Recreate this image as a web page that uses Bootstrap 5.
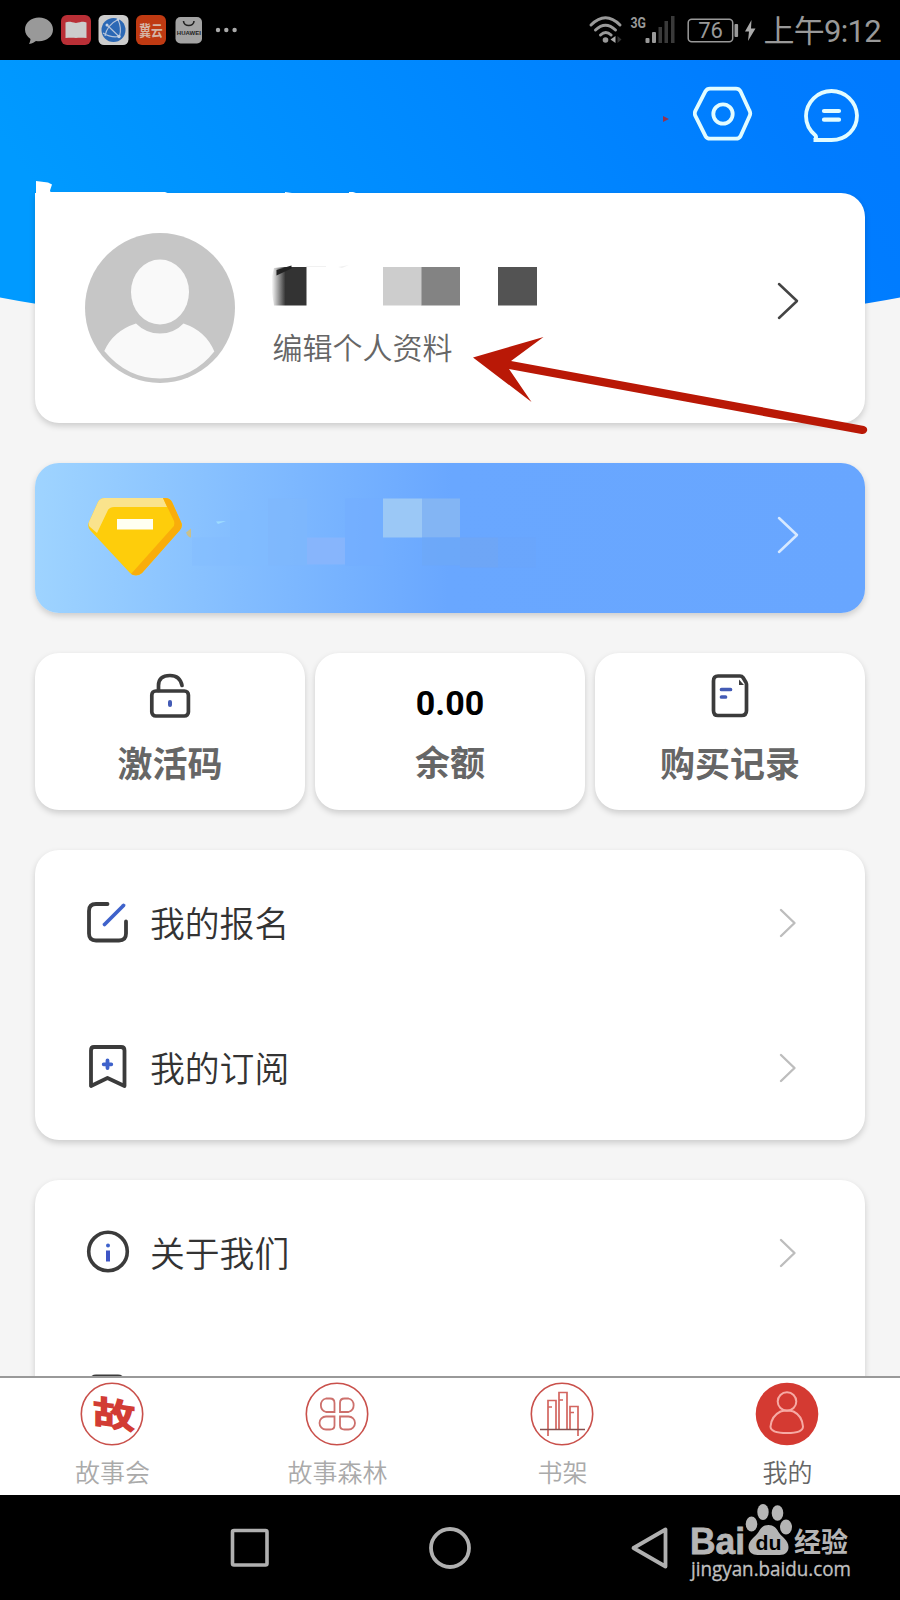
<!DOCTYPE html>
<html lang="zh-CN">
<head>
<meta charset="utf-8">
<meta name="viewport" content="width=device-width, initial-scale=1">
<title>我的</title>
<link href="https://cdn.jsdelivr.net/npm/bootstrap@5.3.0/dist/css/bootstrap.min.css" rel="stylesheet">
<style>
body{font-family:Roboto,"Noto Sans CJK SC",sans-serif;background:#f5f5f5;color:#333}
svg{display:block;flex:none}
.phone{width:900px;height:1600px}
.statusbar{height:60px;background:#000;color:#999}
.status-right{padding-right:19px}
.clock{font-size:31px;line-height:60px;letter-spacing:-.7px;padding-top:3px}
.screen{height:1316px}
.hero-bg{left:0;top:0;z-index:0}
.actions{height:133px;padding:25px 40px 0 0;gap:50px}
.sheet{background:#fff;border-radius:24px;box-shadow:0 3px 6px rgba(0,0,0,.17)}
.stack{padding:0 35px;gap:40px}
.profile{height:229.500px;padding:0 66px 0 50px;border-top-left-radius:0}
.profile-edit{font-size:30px;line-height:36px;color:#666;font-weight:350;padding-left:2.500px}
.profile-text{margin-left:35px;padding-top:15px}
.profile-arrow{margin-bottom:14px}
.notch{left:1px;top:-12px}
.member{height:150px;padding:0 66px 0 0;background:linear-gradient(92deg,#9fd4ff 0,#83bdff 25%,#69a7ff 50%,#68a6ff 100%)}
.member-arrow{margin-bottom:5px}
.stats{gap:10px}
.stat{height:157px;padding-top:19px}
.stat-label{font-size:35px;font-weight:700;line-height:42px;color:#666;padding-top:1px}
.stat-value{font-size:34px;font-weight:700;line-height:47px;color:#000}
.entry{height:145px;padding:0 68px 0 51px;font-size:34.8px;line-height:44px}
.entry-label{margin-left:20px;padding-top:6px;font-weight:350}
.entry-arrow{margin-top:2px}
.tabbar{height:119px;background:#fff;border-top:2px solid #999}
.tab-item{font-size:25px;font-weight:350;color:#aaa;padding-top:4px}
.tab-item span{line-height:32px;margin-top:12px}
.tab-item svg{margin-left:-1px}
.tab-item.current{color:#666}
.sysnav{height:105px;background:#000;gap:157px}
.watermark{right:40px;top:0}
.pointer{left:460px;top:325px;z-index:5}
</style>
</head>
<body>
<div class="phone position-relative overflow-hidden d-flex flex-column">

  <div class="statusbar d-flex align-items-center justify-content-between">
    <svg width="250" height="60" viewBox="0 0 250 60">
      <path d="M39 17.500c-8 0-14 5-14 12 0 4 2 7 5.500 9.500-.2 2-.8 3.600-1.500 5 3.500-.6 5.500-2 7-3 1 .2 2 .2 3 .2 8 0 14-5 14-11.700s-6-12-14-12z" fill="#999"/>
      <rect x="61" y="15" width="30" height="30" rx="6" fill="#b92f36"/>
      <path d="M65.500 22.500c3-1.500 6-.5 10.500.5 4.500-1 7.500-2 10.500-.5v15.500c-4-.5-8-.5-10.500 0-2.500-.5-6.500-.5-10.500 0z" fill="#ccc"/>
      <rect x="98.500" y="15" width="30" height="30" rx="5.500" fill="#ccc"/>
      <circle cx="113.500" cy="30" r="12" fill="#2b68b5"/>
      <path d="M118 19.500Q107 25 105 36M118 19.500q4 9 1.500 17M107 25l12 11.500M103 33q8 5 16 3.500" fill="none" stroke="#b8c6dc" stroke-width="1.100"/>
      <g fill="#c5d2e4"><circle cx="107" cy="25" r="1.500"/><circle cx="119" cy="36.500" r="1.700"/><circle cx="118" cy="19.500" r="1.300"/></g>
      <rect x="136" y="15" width="30" height="30" rx="6" fill="#bf3a12"/>
      <text transform="translate(151 36) scale(.9 1.15)" text-anchor="middle" font-size="13" font-weight="700" font-family="Noto Sans CJK SC,sans-serif" fill="#d5b5a5">冀云</text>
      <rect x="175.500" y="17" width="26.500" height="26.500" rx="5" fill="#a3a3a3"/>
      <path d="M183.500 21c0 6 10.500 6 10.500 0" fill="none" stroke="#222" stroke-width="1.600"/>
      <text x="188.800" y="34.700" text-anchor="middle" font-size="5.600" textLength="24" lengthAdjust="spacingAndGlyphs" font-weight="700" font-family="Liberation Sans,sans-serif" fill="#222">HUAWEI</text>
      <g fill="#aaa"><circle cx="218" cy="30" r="2.200"/><circle cx="226.300" cy="30" r="2.200"/><circle cx="234.600" cy="30" r="2.200"/></g>
    </svg>
    <div class="status-right d-flex align-items-center">
      <svg width="178" height="60" viewBox="584.500 0 178 60">
        <g fill="none" stroke="#999" stroke-width="3" stroke-linecap="round">
          <path d="M590.500 25q14.500-14.500 29 0M595 30q10-9.500 20 0M600 35q5.300-5 10.600 0"/>
        </g>
        <circle cx="605" cy="40" r="2.800" fill="#999"/>
        <path d="M615 36v7l-5-3.500z" fill="#aaa"/><path d="M617 36v7l4-3.500z" fill="#333"/>
        <text x="630" y="28" font-size="15.500" textLength="15.500" lengthAdjust="spacingAndGlyphs" font-weight="700" font-family="Roboto,sans-serif" fill="#999">3G</text>
        <g fill="#999"><rect x="645" y="38" width="4" height="5" rx="1"/><rect x="651.500" y="32" width="4" height="11" rx="1"/></g>
        <g fill="#3a3a3a"><rect x="658" y="27" width="3.500" height="16"/><rect x="664" y="21" width="3.500" height="22"/><rect x="670.500" y="16" width="3.500" height="27"/></g>
        <rect x="687.700" y="19.300" width="44.500" height="22.500" rx="3.500" fill="none" stroke="#999" stroke-width="1.500"/>
        <rect x="734" y="24" width="3.600" height="13" rx="1" fill="#999"/>
        <text x="710" y="38" text-anchor="middle" font-size="22" textLength="24.500" font-family="Roboto,sans-serif" fill="#999">76</text>
        <path d="M751 20l-6.500 11.500h4L747.500 41l7.500-12.500h-4.500z" fill="#aaa"/>
      </svg>
      <span class="clock">上午9:12</span>
    </div>
  </div>

  <main class="screen position-relative overflow-hidden">
    <svg class="hero-bg position-absolute" width="900" height="270" viewBox="0 0 900 270">
      <defs><linearGradient id="sky" x1="0" y1=".3" x2="1" y2="0.1"><stop offset="0" stop-color="#009aff"/><stop offset=".45" stop-color="#008aff"/><stop offset=".85" stop-color="#007cff"/><stop offset="1" stop-color="#007aff"/></linearGradient></defs>
      <path d="M0 0H900V237.500Q830 251 740 258H160Q70 251 0 237.500z" fill="url(#sky)"/>
      <path d="M663 56l6 3-6 3z" fill="#943350"/>
    </svg>

    <div class="position-relative">
      <div class="actions d-flex justify-content-end">
        <svg width="60" height="60" viewBox="693 85 60 60" fill="none" stroke="#e2fcff" stroke-width="3.800">
          <path stroke-linejoin="round" d="M710 88.700h26q3 0 4.500 2.500l9 19.500q1.500 3 0 5.500l-9 20q-1.500 2.500-4.500 2.500h-26q-3 0-4.500-2.500l-10-20q-1.500-2.500 0-5.500l10-19.500q1.500-2.500 4.500-2.500z"/>
          <circle cx="723" cy="114" r="9.700"/>
        </svg>
        <svg width="57" height="60" viewBox="803 85 57 60" fill="none" stroke="#e2fcff" stroke-width="3.800">
          <path d="M813.500 140h18c15 0 25.500-11 25.500-24.500A25.500 25.500 0 0 0 831.500 91 25.500 25.500 0 0 0 806 116c0 8 3.500 14.500 9.500 19.500q1.500 2-1 4.500z"/>
          <path d="M824 111h15M824 119.700h15" stroke-width="4.200" stroke-linecap="round"/>
        </svg>
      </div>

      <div class="stack d-flex flex-column">
        <section class="sheet profile position-relative d-flex align-items-center">
          <svg class="notch position-absolute" width="320" height="14" viewBox="36 181 320 14" fill="#fff"><path d="M36 181l12 1.500 4 2-2 6 .5 1.500H165l5 2H36zM285 194v-2l7 1v1zM349 192h4l3 1v1h-7z"/></svg>
          <svg width="150" height="150" viewBox="0 0 150 150">
            <circle cx="75" cy="75" r="75" fill="#c6c6c6"/>
            <ellipse cx="75" cy="59" rx="29" ry="32.500" fill="#f9f9f9"/>
            <path d="M51 90.500Q61 100.500 75 100.500T98.500 90.500Q121 98 129.300 118.500Q108 145.500 75 145.500T19.300 118Q28 98 51 90.500z" fill="#f9f9f9"/>
          </svg>
          <div class="profile-text flex-grow-1">
            <svg width="272" height="44" viewBox="270 264 272 44">
              <defs><linearGradient id="smudge"><stop offset="0" stop-color="#333" stop-opacity="0"/><stop offset=".4" stop-color="#333"/></linearGradient></defs>
              <path d="M274 269q-5 14 0 37.500h32.500v-38.500h-22z" fill="url(#smudge)"/>
              <path d="M276.500 271l15-4.500v3l-15 7z" fill="#222"/>
              <path d="M306 267h20v1h-20zM338 268l11-2-7 3z" fill="#f1f1f1"/>
              <path d="M383 268h39v38.500h-39z" fill="#cdcdcd"/><path d="M421.500 268H460v38.500h-38.500z" fill="#838383"/>
              <path d="M498 268h39v38.500h-39z" fill="#535353"/>
            </svg>
            <div class="profile-edit mt-4">编辑个人资料</div>
          </div>
          <svg class="profile-arrow" width="22" height="38" viewBox="0 0 22 38" fill="none" stroke="#444" stroke-width="2.500" stroke-linecap="round" stroke-linejoin="round"><path d="M2 2l18 17L2 36"/></svg>
        </section>

        <section class="sheet member d-flex align-items-center justify-content-between">
          <svg width="530" height="150" viewBox="35 462.500 530 150">
            <path fill="#7fb8fb" opacity=".6" d="M268 498h39v67h-39z"/><path fill="#80bbff" opacity=".5" d="M230 510h38v55h-38z"/><path fill="#82bbff" opacity=".4" d="M192 537h38v28h-38z"/><path fill="#8bb5fb" opacity=".8" d="M307 537h38v27h-38z"/><path fill="#73aeff" opacity=".6" d="M345 498h38v67h-38z"/>
            <path fill="#9bc8f6" d="M383 498h39v39h-39z"/><path fill="#83b5f4" d="M422 498h38v39h-38z"/>
            <path fill="#6ea8f5" opacity=".6" d="M422 537h38v28h-38z"/><path fill="#72a5f0" opacity=".6" d="M460 537h38v30h-38z"/><path fill="#6ba5fa" opacity=".6" d="M498 537h38v30h-38z"/>
            <path d="M216 521l10-.5-8 3z" fill="#9edcff"/><path d="M186 532l5-4v9q-3 0-5-5z" fill="#c9c08b"/>
            <path d="M105 497.500h60q5 0 7 4l9 20q2 4-1 8l-38 43q-6 5-12 0l-40-43q-3-4-1-8l9-20q2-4 7-4z" fill="#fecd0b"/>
            <path d="M105 497.500h58l4 9h-53q-4 0-6 3l-11 23-7-6q-2-2-1-5l9-20q2-4 7-4z" fill="#fae38c"/>
            <path d="M163 497.500h2q5 0 7 4l9 20q2 4-1 8l-38 43q-5 4-11 1l42-47q2-2 1-6z" fill="#f9ad0b"/>
            <rect x="117" y="518.500" width="36" height="10.500" fill="#fffff2"/>
          </svg>
          <svg class="member-arrow" width="22" height="38" viewBox="0 0 22 38" fill="none" stroke="#d7e9ff" stroke-width="2.500" stroke-linecap="round" stroke-linejoin="round"><path d="M2 2l18 17L2 36"/></svg>
        </section>

        <section class="stats d-flex">
          <div class="sheet stat flex-fill w-100 d-flex flex-column align-items-center">
            <svg width="44" height="48" viewBox="148 671.500 44 48" fill="none" stroke="#3b3b3b" stroke-width="3.700"><rect x="151.800" y="690.500" width="36.600" height="25" rx="4"/><path stroke-linecap="round" d="M158.500 690v-5q0-10 11.500-10 10 0 12 10"/><path d="M170 701.500v3" stroke="#435bb5" stroke-width="4" stroke-linecap="round"/></svg>
            <div class="stat-label mt-4">激活码</div>
          </div>
          <div class="sheet stat flex-fill w-100 d-flex flex-column align-items-center">
            <div class="stat-value mt-2">0.00</div>
            <div class="stat-label mt-3">余额</div>
          </div>
          <div class="sheet stat flex-fill w-100 d-flex flex-column align-items-center">
            <svg width="44" height="48" viewBox="708 671.500 44 48" fill="none" stroke="#3b3b3b" stroke-width="3.700"><path stroke-linejoin="round" d="M718 675.500h22q2 0 3 1.500l3 5q.5 1 .5 2v26q0 5-5 5h-23.500q-4.500 0-4.500-5v-29.500q0-5 4.500-5z"/><path d="M739 679l5 5.500h-5z" fill="#3b3b3b" stroke="none"/><path d="M721.500 689h9M721.500 696.500h4" stroke="#435bb5" stroke-linecap="round"/></svg>
            <div class="stat-label mt-4">购买记录</div>
          </div>
        </section>

        <section class="sheet">
          <div class="entry d-flex align-items-center">
            <svg width="44" height="48" viewBox="86 899 44 48" fill="none" stroke="#3b3b3b" stroke-width="3.800" stroke-linecap="round"><path d="M107.500 905H96q-7 0-7 7v22.500q0 7 7 7h23q7 0 7-7V922.500"/><path d="M104.500 925.500L123.500 906.500" stroke="#3e62cb"/></svg>
            <span class="entry-label flex-grow-1">我的报名</span>
            <svg class="entry-arrow" width="18" height="30" viewBox="0 0 18 30" fill="none" stroke="#bdbdbd" stroke-width="2.400" stroke-linecap="round" stroke-linejoin="round"><path d="M2 2l13.500 13L2 28"/></svg>
          </div>
          <div class="entry d-flex align-items-center">
            <svg width="44" height="48" viewBox="86 1044 44 48" fill="none" stroke="#3b3b3b" stroke-width="3.800" stroke-linejoin="round"><path d="M94 1048h27q3.500 0 3.500 3.500v35.500l-17-8-16.500 8v-35.500q0-3.500 3-3.500z"/><path d="M107.500 1061.500v7.500M103.700 1065.300h7.600" stroke="#3e62cb" stroke-linecap="round" stroke-width="3.800"/></svg>
            <span class="entry-label flex-grow-1">我的订阅</span>
            <svg class="entry-arrow" width="18" height="30" viewBox="0 0 18 30" fill="none" stroke="#bdbdbd" stroke-width="2.400" stroke-linecap="round" stroke-linejoin="round"><path d="M2 2l13.500 13L2 28"/></svg>
          </div>
        </section>

        <section class="sheet">
          <div class="entry d-flex align-items-center">
            <svg width="44" height="48" viewBox="86 1229 44 48" fill="none" stroke="#3b3b3b" stroke-width="3.600"><circle cx="108" cy="1252.500" r="19.300"/><path d="M108 1251.500v11" stroke="#3e55c5" stroke-width="4"/><circle cx="108" cy="1246.500" r="2" fill="#3e62cb" stroke="none"/></svg>
            <span class="entry-label flex-grow-1">关于我们</span>
            <svg class="entry-arrow" width="18" height="30" viewBox="0 0 18 30" fill="none" stroke="#bdbdbd" stroke-width="2.400" stroke-linecap="round" stroke-linejoin="round"><path d="M2 2l13.500 13L2 28"/></svg>
          </div>
          <div class="entry d-flex align-items-center">
            <svg width="44" height="48" viewBox="0 0 44 48" fill="none" stroke="#3b3b3b" stroke-width="3.800"><rect x="4" y="3.500" width="34" height="40" rx="6"/></svg>
          </div>
        </section>
      </div>
    </div>
  </main>

  <nav class="tabbar row g-0 text-center">
    <div class="tab-item col-3 d-flex flex-column align-items-center">
      <svg width="64" height="64" viewBox="80 1382 64 64"><circle cx="112" cy="1414" r="30.700" fill="none" stroke="#c9504b" stroke-width="1.600"/><text transform="translate(114 1427) skewY(8) scale(1.2 .95)" text-anchor="middle" font-size="36" font-weight="900" font-family="Noto Sans CJK SC,sans-serif" fill="#d23c34">故</text></svg>
      <span>故事会</span>
    </div>
    <div class="tab-item col-3 d-flex flex-column align-items-center">
      <svg width="64" height="64" viewBox="305 1382 64 64" fill="none" stroke="#cd706c" stroke-width="1.800"><circle cx="337" cy="1414" r="30.700" stroke="#c9504b" stroke-width="1.600"/><path d="M334.500 1412v-9q0-4.500-4.500-4.500h-4a7 7 0 0 0 0 13.500zM340 1412v-9q0-4.500 4.500-4.500h4a7 7 0 0 1 0 13.500zM334.500 1416.500v9q0 4-4.500 4h-4a6.500 6.500 0 0 1 0-13zM340 1416.500v9q0 4 4.500 4h4a6.500 6.500 0 0 0 0-13z"/></svg>
      <span>故事森林</span>
    </div>
    <div class="tab-item col-3 d-flex flex-column align-items-center">
      <svg width="64" height="64" viewBox="530 1382 64 64" fill="none" stroke="#d36660" stroke-width="1.700"><circle cx="562" cy="1414" r="30.700" stroke="#c9504b" stroke-width="1.600"/><path d="M548 1436v-35.500h8V1429M548 1407h4M559 1429v-36.500h8V1429M559 1400h4M570 1429v-22.500h8V1436M570 1412.500h4"/><path d="M540 1429.500h45" stroke="#85504e"/></svg>
      <span>书架</span>
    </div>
    <div class="tab-item current col-3 d-flex flex-column align-items-center">
      <svg width="64" height="64" viewBox="755 1382 64 64" fill="none" stroke="#f6aaa4" stroke-width="2"><circle cx="787" cy="1414" r="31.300" fill="#d43a32" stroke="none"/><circle cx="787" cy="1401.500" r="9.300"/><path d="M780.500 1411.500q6.500-2 13 0c6 3 9 9 9.500 15 0 4-4 6.500-16 6.500s-16.500-2.500-16.500-6.500c.5-6 4-12 10-15z"/></svg>
      <span>我的</span>
    </div>
  </nav>

  <div class="sysnav position-relative d-flex align-items-center justify-content-center">
    <svg width="42" height="42" viewBox="0 0 42 42" fill="none" stroke="#b0b0b0" stroke-width="3.600"><rect x="3.500" y="3.500" width="34.500" height="34.500" rx="1.500"/></svg>
    <svg width="44" height="44" viewBox="0 0 44 44" fill="none" stroke="#b0b0b0" stroke-width="3.800"><circle cx="22" cy="22" r="19"/></svg>
    <svg width="42" height="44" viewBox="629.500 1525.500 42 44" fill="none" stroke="#b0b0b0" stroke-width="3.800" stroke-linejoin="round"><path d="M666 1529v37l-32-18.500z"/></svg>
    <svg class="watermark position-absolute" width="175" height="105" viewBox="685 1495 175 105" fill="#b5b5b5">
      <text x="690" y="1553.500" font-size="36" font-weight="700" textLength="55" lengthAdjust="spacingAndGlyphs" font-family="Liberation Sans,sans-serif" stroke="#b5b5b5" stroke-width=".8">Bai</text>
      <ellipse cx="751.500" cy="1524" rx="5.800" ry="7.500"/><ellipse cx="763" cy="1512" rx="5.700" ry="8"/><ellipse cx="777.500" cy="1513" rx="5.800" ry="7.700"/><ellipse cx="786" cy="1527" rx="6" ry="7.500"/>
      <path d="M768.500 1525c-5 0-8 3-10 7-3 5-10 8-10 15 0 5 4 8 9 8h22c6 0 9-3.500 9-8 0-7-7-10-10-15-2-4-5-7-10-7z"/>
      <text x="768.500" y="1550" text-anchor="middle" font-size="21" font-weight="700" textLength="26" lengthAdjust="spacingAndGlyphs" font-family="Liberation Sans,sans-serif" fill="#000">du</text>
      <text x="794" y="1551.500" font-size="27" font-weight="700" textLength="54" font-family="Noto Sans CJK SC,sans-serif">经验</text>
      <text x="691" y="1575.500" font-size="20" textLength="160" lengthAdjust="spacingAndGlyphs" font-family="Open Sans,sans-serif" fill="#c0c0c0" stroke="#c0c0c0" stroke-width=".3">jingyan.baidu.com</text>
    </svg>
  </div>

  <svg class="pointer position-absolute" width="412" height="115" viewBox="460 325 412 115" fill="#b91806"><path d="M473 357.500L543.500 337 511 361 864 426q4 1.500 3 5-1.500 3.500-5.500 3L509 369l22.500 33z"/></svg>
</div>
<script src="https://cdn.jsdelivr.net/npm/bootstrap@5.3.0/dist/js/bootstrap.bundle.min.js"></script>
</body>
</html>
